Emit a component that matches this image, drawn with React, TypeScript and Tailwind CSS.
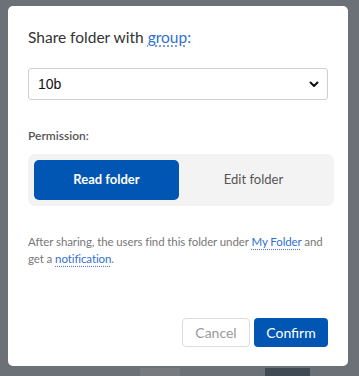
import React from 'react';

export default function App() {
    return (
        <div className="w-[359px] h-[376px] bg-[#6c7177] flex flex-col overflow-hidden" style={{ fontFamily: 'Lato, "Open Sans", sans-serif' }}>
            <div className="ml-[8px] mt-[6px] w-[340px] h-[362px] bg-white rounded-[5px] px-[20px] pt-[19px] pb-[19px] flex flex-col">
                <h2 className="text-[15.5px] leading-[24px] text-[#333]">
                    Share folder with{' '}
                    <a className="text-[#2f6fd1] underline decoration-dotted decoration-[#5b7be0] underline-offset-[3px]">group</a>
                    <span className="text-[#2f6fd1]">:</span>
                </h2>

                <div className="mt-[19px] h-[32px] border border-[#cfcfcf] rounded-[3px] flex items-center justify-between pl-[9px] pr-[7px]">
                    <span className="text-[14px] text-[#111]" style={{ fontFamily: '"Liberation Sans", Arial, sans-serif' }}>10b</span>
                    <svg width="12" height="12" viewBox="0 0 12 12" fill="none">
                        <path d="M2.5 4.5L6 8L9.5 4.5" stroke="#111" strokeWidth="2" strokeLinecap="round" strokeLinejoin="round" />
                    </svg>
                </div>

                <div className="mt-[28px] text-[12px] leading-[16px] font-semibold text-[#555]">Permission:</div>

                <div className="mt-[10px] mr-[-6px] h-[52px] bg-[#f3f3f3] rounded-[7px] p-[6px] flex">
                    <button className="w-[145px] h-full bg-[#0156b3] rounded-[5px] text-white text-[13px] font-bold">Read folder</button>
                    <button className="flex-1 h-full text-[#555] text-[13px]">Edit folder</button>
                </div>

                <p className="mt-[27px] text-[11.5px] tracking-[-0.1px] leading-[17px] text-[#777]">
                    After sharing, the users find this folder under{' '}
                    <a className="text-[#2f6fd1] underline decoration-dotted decoration-[#5b7be0] underline-offset-[3px]">My Folder</a>{' '}
                    and get a{' '}
                    <a className="text-[#2f6fd1] underline decoration-dotted decoration-[#5b7be0] underline-offset-[3px]">notification</a>.
                </p>

                <div className="mt-auto flex justify-end gap-[4px]">
                    <button className="w-[68px] h-[29px] border border-[#dcdcdc] rounded-[4px] text-[14px] text-[#999]">Cancel</button>
                    <button className="w-[74px] h-[29px] bg-[#0156b3] rounded-[4px] text-[14px] text-white">Confirm</button>
                </div>
            </div>
            <div className="flex mt-[2px] h-[8px]">
                <div className="ml-[140px] w-[40px] bg-[#777b7f]" />
                <div className="ml-[85px] w-[45px] bg-[#3f4a55]" />
            </div>
        </div>
    );
}
